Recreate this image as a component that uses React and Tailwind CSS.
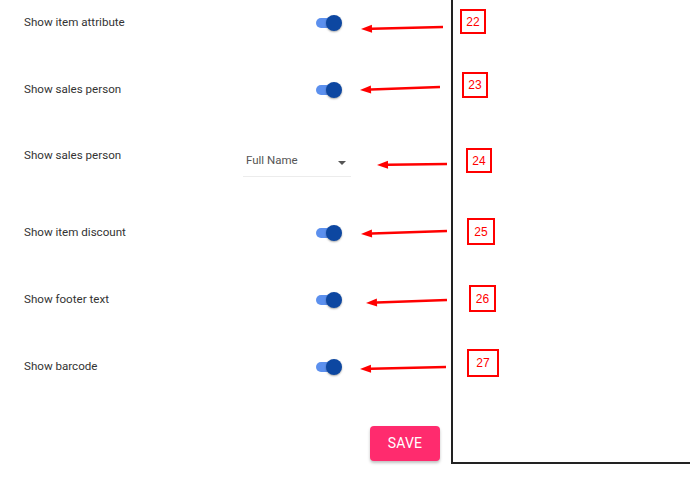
import React from 'react';

const ROWS = [
    { label: 'Show item attribute', top: 6, arrow: [92, 21, 10, 23] },
    { label: 'Show sales person', mt: 35, arrow: [89, 14, 9, 17] },
    { label: 'Show sales person', mt: 35, select: true, arrow: [96, 24, 26, 25] },
    { label: 'Show item discount', mt: 36, arrow: [96, 15, 10, 18] },
    { label: 'Show footer text', mt: 35, arrow: [96, 17, 15, 20] },
    { label: 'Show barcode', mt: 35, arrow: [95, 17, 9, 19] },
];

const BOXES = [
    { n: 22, cls: 'mt-[9px] ml-[7px] w-[26px] h-[25px]' },
    { n: 23, cls: 'mt-[38px] ml-[9px] w-[26px] h-[26px]' },
    { n: 24, cls: 'mt-[50px] ml-[13px] w-[26px] h-[25px]' },
    { n: 25, cls: 'mt-[45px] ml-[14px] w-[28px] h-[27px]' },
    { n: 26, cls: 'mt-[40px] ml-[16px] w-[27px] h-[27px]' },
    { n: 27, cls: 'mt-[37px] ml-[14px] w-[32px] h-[28px]' },
];

function Arrow({ pts, h }) {
    const [x1, y1, x2, y2] = pts;
    // arrowhead pointing left at (x2, y2)
    const dx = x1 - x2, dy = y1 - y2;
    const len = Math.hypot(dx, dy);
    const ux = dx / len, uy = dy / len;
    const bx = x2 + ux * 11, by = y2 + uy * 11;
    const head = `${x2},${y2} ${bx - uy * 4},${by + ux * 4} ${bx + uy * 4},${by - ux * 4}`;
    return (
        <svg width="100" height={h} viewBox={`0 0 100 ${h}`} className="shrink-0">
            <line x1={x1} y1={y1} x2={bx} y2={by} stroke="#ff0000" strokeWidth="2.5" />
            <polygon points={head} fill="#ff0000" />
        </svg>
    );
}

function Toggle() {
    return (
        <div className="relative w-[26px] h-[16px] ml-[73px] mt-[2px]">
            <div className="absolute left-0 top-[3px] w-[24px] h-[10px] rounded-full bg-[#5c90ee]" />
            <div className="absolute left-[10px] top-0 w-[16px] h-[16px] rounded-full bg-[#0d47a1] shadow-[0_1px_2px_rgba(0,0,0,0.35)]" />
        </div>
    );
}

function Select() {
    return (
        <div className="w-[108px] h-[27px] mt-[10px] border-b border-[#ececec] flex items-start justify-between pl-[3px] pr-[5px] pt-[2px]">
            <span className="text-[11.5px] leading-[16px] text-[#555]">Full Name</span>
            <svg width="8" height="4" viewBox="0 0 8 4" className="mt-[9px]">
                <polygon points="0,0 8,0 4,4" fill="#555" />
            </svg>
        </div>
    );
}

export default function App() {
    return (
        <div className="w-[690px] h-[492px] bg-white flex font-['Roboto',sans-serif]">
            {/* Settings list */}
            <div className="w-[451px] shrink-0 flex flex-col pt-[6px]">
                {ROWS.map((r, i) => (
                    <div
                        key={i}
                        className={`flex pl-[24px] ${r.select ? 'h-[40px] items-start' : 'h-[32px] items-center'}`}
                        style={i > 0 ? { marginTop: r.mt } : undefined}
                    >
                        <span className={`w-[219px] shrink-0 text-[11.6px] leading-[16px] text-[#333] ${r.select ? 'mt-[7px]' : ''}`}>
                            {r.label}
                        </span>
                        <div className="w-[108px] shrink-0 flex items-center">
                            {r.select ? <Select /> : <Toggle />}
                        </div>
                        <Arrow pts={r.arrow} h={r.select ? 40 : 32} />
                    </div>
                ))}

                <div className="flex justify-end pr-[11px] mt-[44px]">
                    <button className="w-[70px] h-[35px] rounded-[4px] bg-[#ff2b6e] text-white text-[14px] font-normal tracking-[0.2px] shadow-[0_2px_3px_rgba(0,0,0,0.25)]">
                        SAVE
                    </button>
                </div>
            </div>

            {/* Annotation panel */}
            <div className="flex-1 h-[464px] border-l-2 border-b-2 border-[#222] flex flex-col items-start">
                {BOXES.map(b => (
                    <div
                        key={b.n}
                        className={`${b.cls} border-2 border-[#ff0000] flex items-center justify-center text-[#ff0000] text-[12px] font-['Liberation_Sans',sans-serif]`}
                    >
                        {b.n}
                    </div>
                ))}
            </div>
        </div>
    );
}
